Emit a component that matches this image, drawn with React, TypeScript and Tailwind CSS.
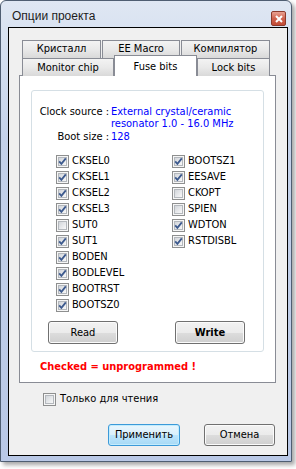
import { useId } from 'react';

const font = { fontFamily: '"DejaVu Sans Condensed", "Liberation Sans", Arial, sans-serif' };
const titleFont = { fontFamily: '"Liberation Sans", Arial, sans-serif' };

function Check({ on }: { on: boolean }) {
  const id = useId();
  return (
    <svg width="13" height="13" viewBox="0 0 13 13" className="shrink-0">
      <defs>
        <linearGradient id={id} x1="0" y1="0" x2="1" y2="1">
          <stop offset="0" stopColor="#cfd3d8" />
          <stop offset="1" stopColor="#fbfbfb" />
        </linearGradient>
      </defs>
      <rect x="0.5" y="0.5" width="12" height="12" fill="#f6f6f6" stroke="#8e8f8f" />
      <rect x="2.5" y="2.5" width="8" height="8" fill={`url(#${id})`} stroke="#b4b8bd" />
      {on && <path d="M3.2 6.4 L5.4 8.9 L9.8 3.4" fill="none" stroke="#3d5a8e" strokeWidth="1.8" />}
    </svg>
  );
}

function Btn({ label, w, bold, focus }: { label: string; w: string; bold?: boolean; focus?: boolean }) {
  return (
    <div
      className={`${w} flex items-center justify-center rounded-[3px] border text-[11px] text-black ${bold ? 'font-bold' : ''} ${
        focus
          ? 'border-[#3c9ad9] bg-[linear-gradient(#eaf6fd_0%,#d9f0fc_50%,#bee6fd_50%,#a7d9f5_100%)] shadow-[inset_0_0_0_1px_#c3ecfd]'
          : 'border-[#707070] bg-[linear-gradient(#f2f2f2_0%,#ebebeb_50%,#dddddd_50%,#cfcfcf_100%)] shadow-[inset_0_0_0_1px_#fbfbfb]'
      }`}
    >
      {label}
    </div>
  );
}

const tabCls =
  'flex items-center justify-center border border-b-0 border-[#898c95] bg-[linear-gradient(#f3f3f3,#e9e9e9_50%,#d9d9d9)] text-[11px] text-black';

const left: [string, boolean][] = [
  ['CKSEL0', true],
  ['CKSEL1', true],
  ['CKSEL2', true],
  ['CKSEL3', true],
  ['SUT0', false],
  ['SUT1', true],
  ['BODEN', true],
  ['BODLEVEL', true],
  ['BOOTRST', true],
  ['BOOTSZ0', true],
];

const right: [string, boolean][] = [
  ['BOOTSZ1', true],
  ['EESAVE', true],
  ['CKOPT', false],
  ['SPIEN', false],
  ['WDTON', true],
  ['RSTDISBL', true],
];

function Bit({ name, on }: { name: string; on: boolean }) {
  return (
    <div className="flex h-[16px] items-center gap-[3px] text-[11px] text-black">
      <Check on={on} />
      <span>{name}</span>
    </div>
  );
}

export default function App() {
  return (
    <div className="h-[469px] w-[296px] bg-white" style={font}>
      {/* window frame */}
      <div className="flex h-[462px] w-[292px] flex-col rounded-t-[6px] border border-[#4f5e72] bg-[linear-gradient(#dfe7f3,#c4d2ea_30%,#b9c8e6)] shadow-[3px_3px_4px_rgba(0,0,0,0.35)]">
        <div className="flex h-[26px] items-start justify-between">
          <span className="ml-[11px] mt-[8px] text-[12px] leading-[14px] text-[#1c1c1c]" style={titleFont}>
            Опции проекта
          </span>
          <div className="mr-[5px] mt-[10px] flex h-[15px] w-[15px] items-center justify-center rounded-[2px] border border-[#8d3a2c] bg-[linear-gradient(#e9a192,#d0634f_50%,#c24b35)]">
            <svg width="8" height="8" viewBox="0 0 8 8">
              <path d="M1 1 L7 7 M7 1 L1 7" stroke="white" strokeWidth="2" />
            </svg>
          </div>
        </div>

        {/* client area */}
        <div className="ml-[7px] flex h-[429px] w-[280px] flex-col border border-black bg-[#f0f0f0]">
          <div className="ml-[10px] mt-[12px] w-[257px]">
            <div className="flex gap-[1px] pl-[3px]">
              <div className={`${tabCls} h-[18px] w-[79px]`}>Кристалл</div>
              <div className={`${tabCls} h-[18px] w-[78px]`}>EE Macro</div>
              <div className={`${tabCls} h-[18px] w-[89px]`}>Компилятор</div>
            </div>
            <div className="-mt-[3px] flex h-[21px] items-end pl-[3px]">
              <div className={`${tabCls} h-[18px] w-[92px] pt-[2px]`}>Monitor chip</div>
              <div className="relative z-10 flex h-[21px] w-[83px] items-start justify-center border border-b-0 border-[#898c95] bg-white pt-[3px] text-[11px] text-black">
                Fuse bits
              </div>
              <div className={`${tabCls} h-[18px] w-[73px] pt-[2px]`}>Lock bits</div>
            </div>

            {/* tab panel */}
            <div className="-mt-px h-[308px] border border-[#898c95] bg-white">
              <div className="ml-[11px] mt-[14px] h-[262px] w-[233px] rounded-[3px] border border-[#d5dfe5] pt-[15px] text-[11px] leading-[12px]">
                <div className="grid grid-cols-[77px_1fr]">
                  <div className="text-right text-black">Clock source :</div>
                  <div className="pl-[2px] text-[#0000ff]">
                    External crystal/ceramic
                    <br />
                    resonator 1.0 - 16.0 MHz
                  </div>
                </div>
                <div className="mt-[1px] grid grid-cols-[77px_1fr]">
                  <div className="text-right text-black">Boot size :</div>
                  <div className="pl-[2px] text-[#0000ff]">128</div>
                </div>

                <div className="mt-[10px] grid grid-cols-[116px_1fr] pl-[24px]">
                  <div className="flex flex-col">
                    {left.map(([n, on]) => (
                      <Bit key={n} name={n} on={on} />
                    ))}
                  </div>
                  <div className="flex flex-col">
                    {right.map(([n, on]) => (
                      <Bit key={n} name={n} on={on} />
                    ))}
                  </div>
                </div>

                <div className="mt-[8px] flex gap-[57px] pl-[16px]">
                  <Btn label="Read" w="h-[23px] w-[70px]" />
                  <Btn label="Write" w="h-[23px] w-[70px]" bold />
                </div>
              </div>

              <div className="ml-[20px] mt-[9px] text-[11px] font-bold leading-[12px] text-[#ff0000]">
                Checked = unprogrammed !
              </div>
            </div>
          </div>

          <div className="ml-[34px] mt-[10px] flex h-[13px] items-center gap-[4px] text-[11px] text-black">
            <Check on={false} />
            <span>Только для чтения</span>
          </div>

          <div className="ml-[99px] mt-[18px] flex gap-[24px]">
            <Btn label="Применить" w="h-[22px] w-[72px]" focus />
            <Btn label="Отмена" w="h-[22px] w-[71px]" />
          </div>
        </div>
      </div>
    </div>
  );
}
